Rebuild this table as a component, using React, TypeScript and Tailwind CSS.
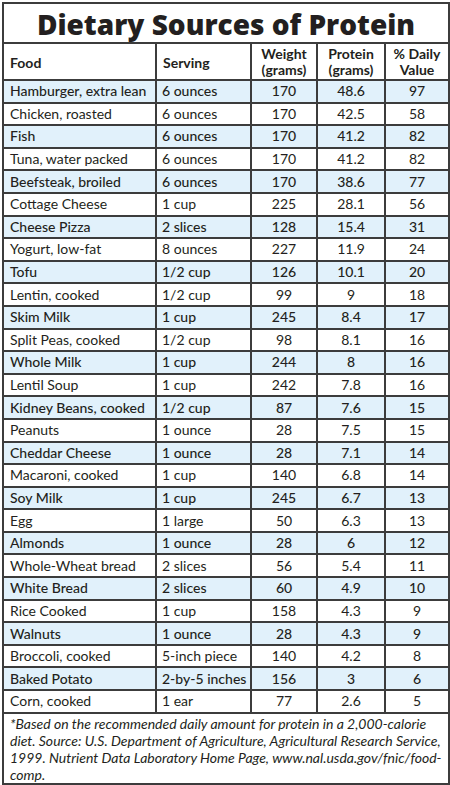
const rows: [string, string, string, string, string][] = [
	["Hamburger, extra lean", "6 ounces", "170", "48.6", "97"],
	["Chicken, roasted", "6 ounces", "170", "42.5", "58"],
	["Fish", "6 ounces", "170", "41.2", "82"],
	["Tuna, water packed", "6 ounces", "170", "41.2", "82"],
	["Beefsteak, broiled", "6 ounces", "170", "38.6", "77"],
	["Cottage Cheese", "1 cup", "225", "28.1", "56"],
	["Cheese Pizza", "2 slices", "128", "15.4", "31"],
	["Yogurt, low-fat", "8 ounces", "227", "11.9", "24"],
	["Tofu", "1/2 cup", "126", "10.1", "20"],
	["Lentin, cooked", "1/2 cup", "99", "9", "18"],
	["Skim Milk", "1 cup", "245", "8.4", "17"],
	["Split Peas, cooked", "1/2 cup", "98", "8.1", "16"],
	["Whole Milk", "1 cup", "244", "8", "16"],
	["Lentil Soup", "1 cup", "242", "7.8", "16"],
	["Kidney Beans, cooked", "1/2 cup", "87", "7.6", "15"],
	["Peanuts", "1 ounce", "28", "7.5", "15"],
	["Cheddar Cheese", "1 ounce", "28", "7.1", "14"],
	["Macaroni, cooked", "1 cup", "140", "6.8", "14"],
	["Soy Milk", "1 cup", "245", "6.7", "13"],
	["Egg", "1 large", "50", "6.3", "13"],
	["Almonds", "1 ounce", "28", "6", "12"],
	["Whole-Wheat bread", "2 slices", "56", "5.4", "11"],
	["White Bread", "2 slices", "60", "4.9", "10"],
	["Rice Cooked", "1 cup", "158", "4.3", "9"],
	["Walnuts", "1 ounce", "28", "4.3", "9"],
	["Broccoli, cooked", "5-inch piece", "140", "4.2", "8"],
	["Baked Potato", "2-by-5 inches", "156", "3", "6"],
	["Corn, cooked", "1 ear", "77", "2.6", "5"],
];

export default function App() {
	return (
		<div className="bg-white p-[2px] font-['Lato',sans-serif] text-[#231f20]">
			<table className="w-[446px] table-fixed border-collapse border-2 border-[#3c3c3c]">
				<colgroup>
					<col className="w-[153px]" />
					<col className="w-[95px]" />
					<col className="w-[66px]" />
					<col className="w-[68px]" />
					<col className="w-[64px]" />
				</colgroup>
				<thead>
					<tr className="h-[40px]">
						<th
							className="border-2 border-[#3c3c3c] pt-[2px] text-center font-['Open_Sans',sans-serif] text-[28px] font-extrabold leading-none"
							colSpan={5}
						>
							Dietary Sources of Protein
						</th>
					</tr>
					<tr className="h-[37px] text-[14px] font-bold leading-[16px]">
						<th className="border-2 border-[#3c3c3c] px-[6px] pt-[3px] text-left">Food</th>
						<th className="border-2 border-[#3c3c3c] px-[6px] pt-[3px] text-left">Serving</th>
						<th className="border-2 border-[#3c3c3c] text-center">
							Weight
							<br />
							(grams)
						</th>
						<th className="border-2 border-[#3c3c3c] text-center">
							Protein
							<br />
							(grams)
						</th>
						<th className="border-2 border-[#3c3c3c] text-center">
							% Daily
							<br />
							Value
						</th>
					</tr>
				</thead>
				<tbody className="text-[14px] leading-none">
					{rows.map((r, i) => (
						<tr
							className={
								i % 2 === 0 ? "h-[22.6px] bg-[#e1f1fb] font-medium" : "h-[22.6px] bg-white"
							}
							key={r[0]}
						>
							<td className="whitespace-nowrap border-2 border-[#3c3c3c] px-[6px]">{r[0]}</td>
							<td className="whitespace-nowrap border-2 border-[#3c3c3c] px-[5px]">{r[1]}</td>
							<td className="border-2 border-[#3c3c3c] text-center">{r[2]}</td>
							<td className="border-2 border-[#3c3c3c] text-center">{r[3]}</td>
							<td className="border-2 border-[#3c3c3c] text-center">{r[4]}</td>
						</tr>
					))}
					<tr>
						<td
							className="border-2 border-[#3c3c3c] px-[6px] pt-[1px] text-[14px] italic leading-[17px]"
							colSpan={5}
						>
							*Based on the recommended daily amount for protein in a 2,000-calorie diet.
							Source: U.S. Department of Agriculture, Agricultural Research Service, 1999.
							Nutrient Data Laboratory Home Page, www.nal.usda.gov/fnic/food-comp.
						</td>
					</tr>
				</tbody>
			</table>
		</div>
	);
}
